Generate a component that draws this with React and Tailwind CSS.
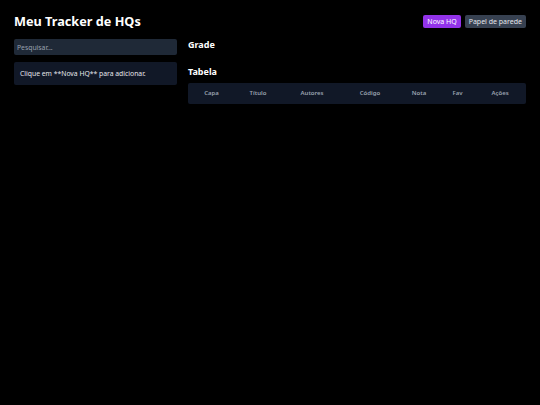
export default function App() {
  const cols = [
    ['Capa', 'w-[47px]'],
    ['Título', 'w-[46px]'],
    ['Autores', 'w-[62px]'],
    ['Código', 'w-[54px]'],
    ['Nota', 'w-[44px]'],
    ['Fav', 'w-[33px]'],
    ['Ações', 'flex-1'],
  ];

  return (
    <div className="min-h-[405px] bg-black text-gray-100 px-[14px] pt-[11px] font-['Noto_Sans',sans-serif]">
      <header className="flex items-center justify-between">
        <h1 className="text-[12.7px] font-bold leading-[20px] text-white">Meu Tracker de HQs</h1>
        <div className="flex gap-[4px]">
          <button className="h-[13px] px-[4px] rounded-[2px] bg-[#9333ea] text-white text-[7px] leading-none">
            Nova HQ
          </button>
          <button className="h-[13px] px-[4px] rounded-[2px] bg-[#374151] text-gray-200 text-[7px] leading-none">
            Papel de parede
          </button>
        </div>
      </header>

      <div className="grid grid-cols-[163px_1fr] gap-[11px] mt-[8px]">
        <aside className="flex flex-col gap-[7px]">
          <input
            className="h-[16px] w-full rounded-[2px] bg-[#1f2937] px-[3px] text-[6.8px] text-gray-300 placeholder:text-gray-400 outline-none"
            placeholder="Pesquisar..."
          />
          <div className="rounded-[2px] bg-[#111827] px-[6px] py-[7px] text-[6.8px] leading-[9px] text-gray-200">
            Clique em **Nova HQ** para adicionar.
          </div>
        </aside>

        <main>
          <h2 className="text-[9px] font-bold leading-[12px] text-white">Grade</h2>
          <h2 className="text-[9px] font-bold leading-[12px] text-white mt-[15px]">Tabela</h2>
          <div className="mt-[5px] flex h-[21px] items-center rounded-[2px] bg-[#111827]">
            {cols.map(([label, w]) => (
              <div key={label} className={`${w} text-center text-[6px] font-semibold text-gray-400`}>
                {label}
              </div>
            ))}
          </div>
        </main>
      </div>
    </div>
  );
}
